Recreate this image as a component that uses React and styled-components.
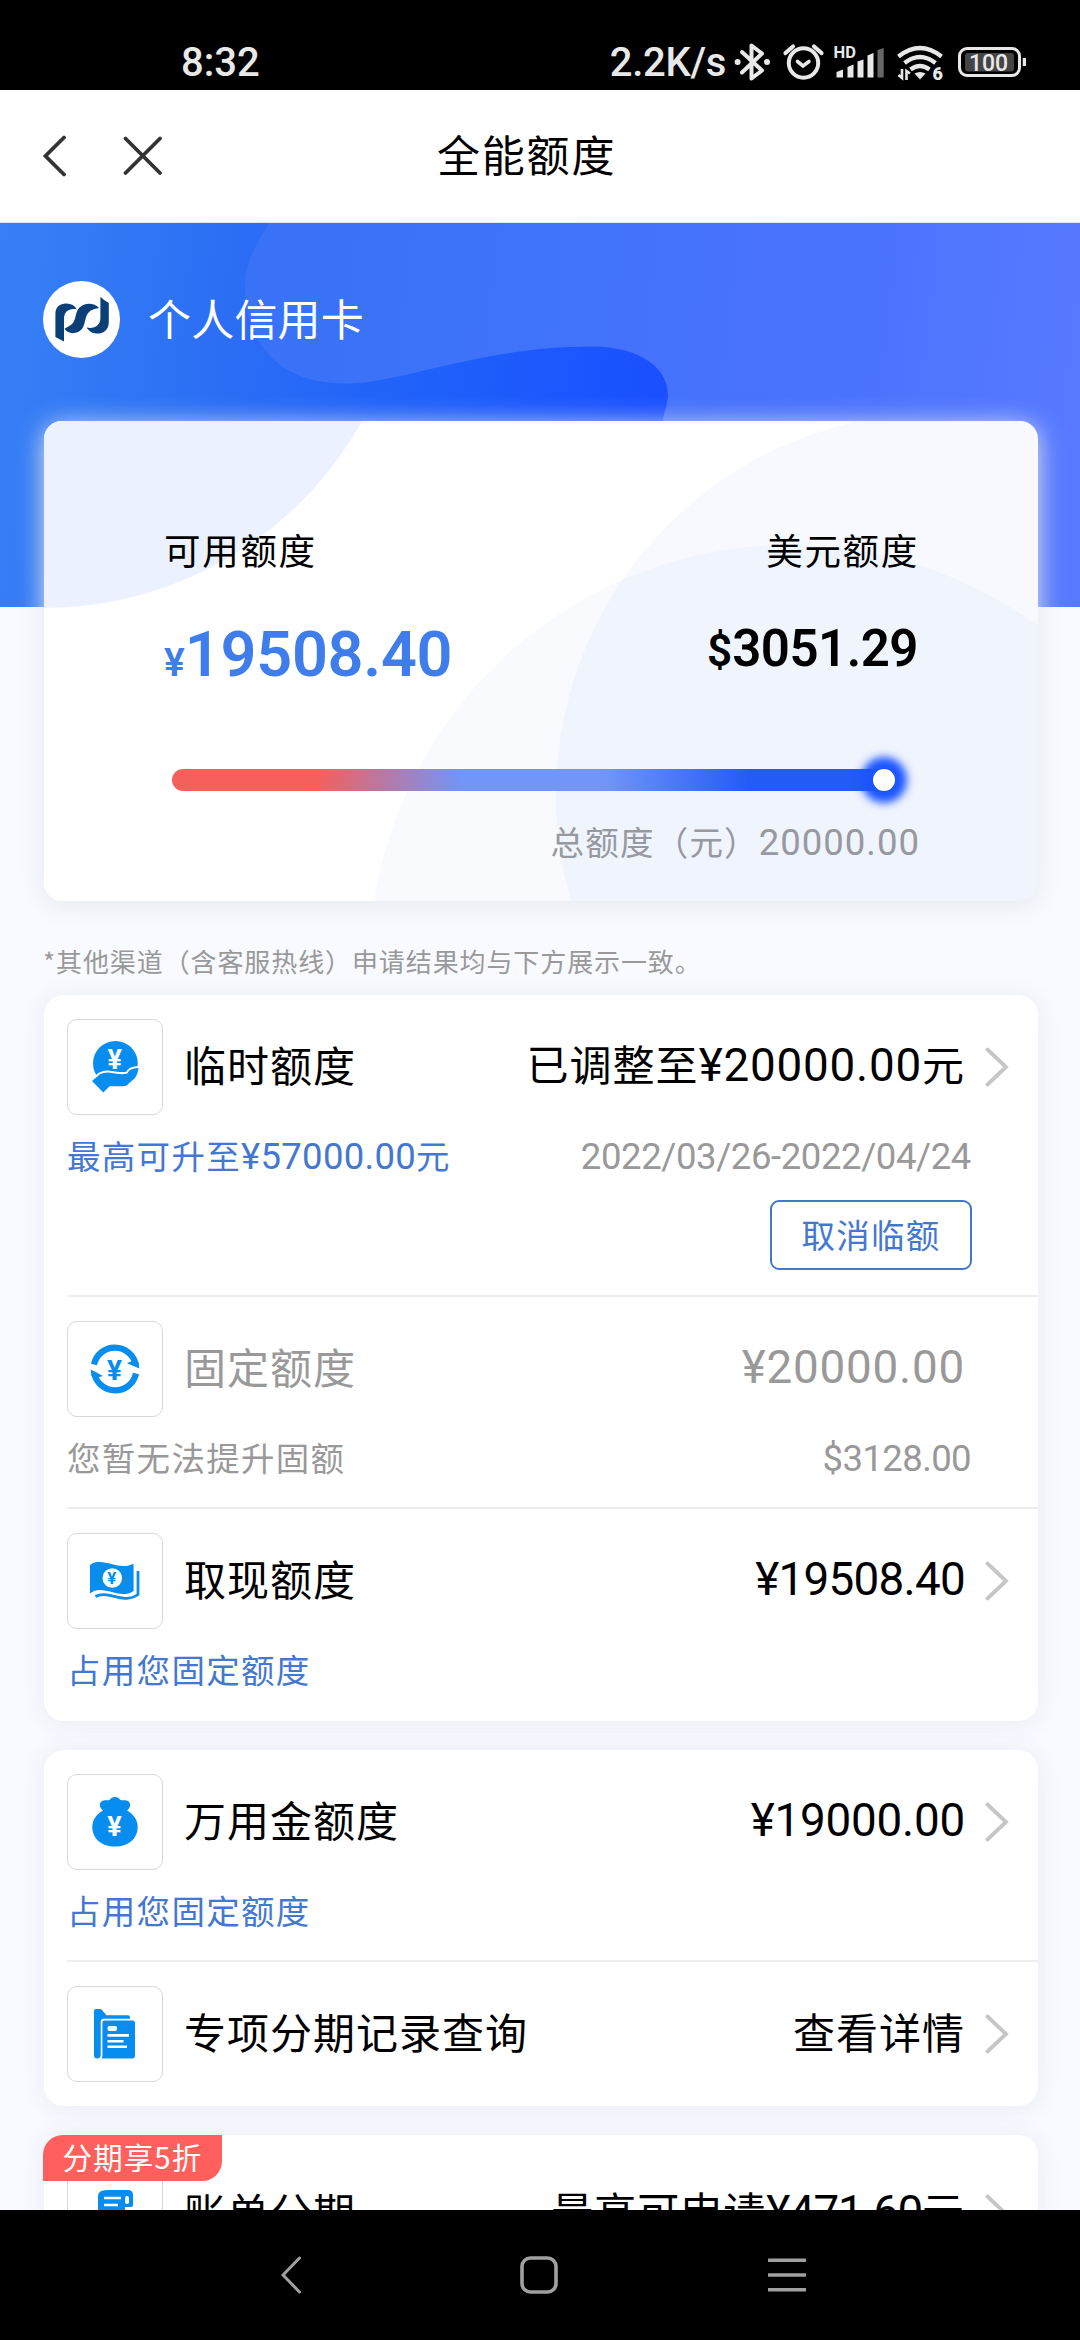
import React from "react"
import styled, { createGlobalStyle } from "styled-components"

const GlobalStyle = createGlobalStyle`
  * {
    box-sizing: border-box;
  }

  body {
    margin: 0;
    background: #000;
    font-family: "Noto Sans CJK SC", sans-serif;
    color: #000;
  }

  svg {
    display: block;
    flex: none;
  }
`

const Screen = styled.div`
  display: flex;
  flex-direction: column;
  width: 1080px;
  height: 2340px;
  overflow: hidden;
`

const StatusBar = styled.div`
  display: flex;
  align-items: flex-start;
  justify-content: space-between;
  height: 90px;
  padding: 40px 54px 0 181px;
  background: #000;
  color: #e8e8e8;
`

const StatusText = styled.span`
  font: 500 40px/46px Roboto, sans-serif;
  letter-spacing: ${props => props.$tracking || 0}px;
`

const StatusIcons = styled.div`
  display: flex;
  gap: 8px;
`

const TitleBar = styled.header`
  display: flex;
  align-items: center;
  height: 133px;
  padding: 0 43px 1px;
  background: #fff;
  border-bottom: 1px solid #dfe8fb;
`

const CloseIcon = styled.svg`
  margin-left: 57px;
`

const PageTitle = styled.h1`
  margin: 0 0 5px 274px;
  font-size: 43px;
  line-height: 60px;
  font-weight: 400;
  letter-spacing: 1.8px;
`

const Content = styled.main`
  flex: 1;
  min-height: 0;
  overflow: hidden;
  background: #f8faff;
`

const Hero = styled.section`
  position: relative;
  height: 384px;
  padding: 58px 43px;
  background: linear-gradient(97deg, #3781f5 0%, #2b6df5 22%, #2060fa 40%, #1a50ff 60%);
`

const HeroArt = styled.svg`
  position: absolute;
  inset: 0;
`

const CardName = styled.div`
  position: relative;
  display: flex;
  align-items: center;
  gap: 28px;
  height: 77px;
  color: #fff;
  font-size: 43px;
  line-height: 60px;
  letter-spacing: 0.2px;

  span {
    padding-bottom: 6px;
  }
`

const LimitCard = styled.section`
  position: relative;
  width: 994px;
  height: 480px;
  margin: -186px 0 0 44px;
  padding: 102px 121px 0 120px;
  border-radius: 18px;
  background: #fff;
  box-shadow: 0 4px 26px #e4e8ec;
`

const CardArt = styled.svg`
  position: absolute;
  inset: 0;
  border-radius: 18px;
`

const CardBody = styled.div`
  position: relative;
`

const Split = styled.div`
  display: flex;
  justify-content: space-between;
`

const LimitColumn = styled.div`
  text-align: ${props => props.$align || "left"};
`

const LimitLabel = styled.div`
  margin-right: -2px;
  font-size: 36.5px;
  line-height: 54px;
  letter-spacing: 1.7px;
`

const LimitAmount = styled.div`
  margin-top: ${props => (props.$primary ? 40 : 34)}px;
  margin-right: -1px;
  font: 600 ${props => (props.$primary ? 63 : 51)}px/76px Roboto, sans-serif;
  letter-spacing: ${props => (props.$primary ? -0.3 : -0.5)}px;
  color: ${props => (props.$primary ? "#3f7eea" : "#000")};

  small {
    font-size: ${props => (props.$primary ? 39 : 44)}px;
    letter-spacing: 0;
  }
`

const Track = styled.div`
  display: flex;
  justify-content: flex-end;
  width: 723px;
  height: 22px;
  margin: 68px 0 0 8px;
  border-radius: 11px;
  background: linear-gradient(
    90deg,
    #f5605b 20%,
    #7195f8 40%,
    #7195f8 60%,
    #225bf5 80%
  );
`

const Knob = styled.span`
  width: 22px;
  height: 22px;
  border-radius: 50%;
  background: #fff;
  box-shadow: 0 0 8px 12px #1c55ff;
`

const Total = styled.div`
  margin: 25px -3px 0 0;
  text-align: right;
  color: #96999f;
  font-size: 33.5px;
  line-height: 50px;
  letter-spacing: 1.2px;
`

const Num = styled.span`
  font-family: Roboto, sans-serif;
  font-size: 1.09em;
  letter-spacing: ${props => props.$tracking || 0}px;
`

const Note = styled.p`
  margin: 35px 0 10px 43px;
  color: #999;
  font-size: 26px;
  line-height: 49px;
  letter-spacing: 0.9px;
`

const Panel = styled.section`
  position: relative;
  width: 994px;
  margin: 0 0 29px 44px;
  padding-top: ${props => (props.$flagged ? 7 : 0)}px;
  border-radius: 20px;
  background: #fff;
  box-shadow: 0 2px 26px #e8ebf0;
`

const Item = styled.div`
  margin-left: 23px;
  padding-top: 24px;
  min-height: ${props => props.$height}px;
  border-bottom: ${props => (props.$last ? "none" : "2px solid #ededed")};
`

const ItemHead = styled.div`
  display: flex;
  align-items: center;
  height: 96px;
  padding-right: 29px;
  font-size: 42px;
  line-height: 60px;
  letter-spacing: 1px;
  color: ${props => (props.$muted ? "#999" : "#000")};
`

const IconBox = styled.div`
  display: flex;
  align-items: center;
  justify-content: center;
  width: 96px;
  height: 96px;
  margin-right: 21px;
  border: 1px solid #d8d8d8;
  border-radius: 10px;
`

const ItemTitle = styled.div`
  padding-bottom: 6px;
`

const ItemValue = styled.div`
  margin-left: auto;
  margin-right: ${props => (props.$linked ? 20 : 44)}px;
  padding-bottom: 6px;
`

const ItemSub = styled.div`
  display: flex;
  justify-content: space-between;
  margin: 15px 67px 0 0;
  font-size: 33.5px;
  line-height: 50px;
  letter-spacing: 1.3px;
  color: ${props => (props.$link ? "#4478d0" : "#999")};
`

const SubValue = styled.span`
  color: #999;
`

const CancelButton = styled.button`
  display: block;
  width: 202px;
  height: 70px;
  margin: 18px 66px 0 auto;
  padding: 0 0 3px;
  border: 2px solid #4378c8;
  border-radius: 9px;
  background: #fff;
  color: #4478d0;
  font: 33.5px/60px "Noto Sans CJK SC", sans-serif;
  letter-spacing: 1.2px;
`

const Flag = styled.span`
  position: absolute;
  top: 0;
  left: -1px;
  width: 179px;
  height: 46px;
  border-radius: 20px 0 20px 0;
  background: #ff605e;
  color: #fff;
  font-size: 29.5px;
  line-height: 42px;
  letter-spacing: 1.1px;
  text-align: center;
`

const NavBar = styled.nav`
  display: flex;
  align-items: center;
  gap: 210px;
  height: 130px;
  padding-left: 281px;
  background: #000;
`

const HomeIcon = styled.svg`
  margin-left: 9px;
`

const BLUE = "#078df0"

function Yen({ x, y, size, fill = "#fff" }) {
  return (
    <text
      x={x}
      y={y}
      fill={fill}
      fontFamily="Roboto, sans-serif"
      fontWeight="700"
      fontSize={size}
      textAnchor="middle"
    >
      ¥
    </text>
  )
}

function HandIcon() {
  return (
    <svg width="48" height="52" viewBox="0 0 48 52">
      <circle cx="24.4" cy="22.4" r="22.4" fill={BLUE} />
      <path
        d="M1 40 9 33.3Q14 31 19 31.8C26 32.6 31 34 36.4 32.6 38 29 40 27.5 47.5 27 47 31 46 34 44 37L35.5 44.5Q34 45.5 31 45.3H18.5L12.3 51.5Z"
        fill={BLUE}
        stroke="#fff"
        strokeWidth="4"
        paintOrder="stroke"
      />
      <Yen x={24.2} y={28} size={27} />
    </svg>
  )
}

function CycleIcon() {
  return (
    <svg width="50" height="52" viewBox="-25 -26 50 52">
      <g fill="none" stroke={BLUE} strokeWidth="6.2">
        <path d="M-21-4.5A21.3 21.3 0 0 1 20.8-4" />
        <path d="M21 4.5A21.3 21.3 0 0 1-20.8 4" />
      </g>
      <path d="M24.3-.5 12-5.7 19-9 23.5-7ZM-24.3.5-12 7-19 9-23.5 7Z" fill={BLUE} />
      <Yen x={0} y={10.5} size={28} fill={BLUE} />
    </svg>
  )
}

function BillIcon() {
  return (
    <svg width="50" height="39" viewBox="0 0 50 39">
      <path
        d="M0 3C3 .5 6 0 10 0 17 0 26 4 33 4 37 4 40 3.3 43.6 1.7V29C40 31.5 37 32 33 32 26 32 18 28 10 28 6 28 3 29 0 31.5Z"
        fill={BLUE}
      />
      <path
        d="M48 9V32.5C44 35.5 40 36.6 35 36.3 27 36 21 32.8 14 32.6 10 32.5 8 33 5.5 34.5"
        fill="none"
        stroke={BLUE}
        strokeWidth="2.8"
      />
      <circle cx="22.3" cy="16" r="9.8" fill="#fff" />
      <Yen x={22.3} y={22} size={17} fill={BLUE} />
    </svg>
  )
}

function BagIcon() {
  return (
    <svg width="46" height="50" viewBox="0 0 46 50">
      <path
        d="M11 13.5C6 10 7 3 13 3.2 15 3.2 16.5 3.6 18 2.4 21-.7 25-.7 28 2.4 29.5 3.6 31 3.2 33 3.2 39 3 40 10 35 13.5 42 17.5 45.7 23 45.7 30 45.7 42 36 49.5 23 49.5S.3 42 .3 30C.3 23 4 17.5 11 13.5Z"
        fill={BLUE}
      />
      <Yen x={23} y={38.5} size={27} />
    </svg>
  )
}

function RecordIcon() {
  return (
    <svg width="42" height="50" viewBox="0 0 42 50">
      <path
        d="M0 2Q0 0 2 0H7L12.5 6.3H34Q36 6.3 36 8.3V9.8H9.5Q6.7 10 6.7 13V47Q6 49.5 3.3 49.5 0 49.5 0 46Z"
        fill={BLUE}
      />
      <path
        d="M10.5 11.5H38.5Q41 11.5 41 14V46.5Q41 49.5 38 49.5H7.6Q8.4 48 8.4 46V13.5Q8.4 11.5 10.5 11.5Z"
        fill={BLUE}
      />
      <rect x="13.5" y="17" width="9.5" height="5" rx="2" fill="#fff" />
      <path d="M13.5 26.4H35M13.5 32.2H29.5M13.5 37.8H33" stroke="#fff" strokeWidth="2.6" />
    </svg>
  )
}

function StatementIcon() {
  return (
    <svg width="50" height="48" viewBox="0 0 50 48">
      <path
        d="M17 0H38Q43 0 43 5V15Q43 17 41 17H35V42Q35 46 31 46H12Q8 46 8 42V6Q8 0 17 0Z"
        fill={BLUE}
      />
      <path d="M14 8H31M14 15H28M14 22H28" stroke="#fff" strokeWidth="2.6" />
      <path d="M37 12V8" stroke="#fff" strokeWidth="4" strokeLinecap="round" />
    </svg>
  )
}

function Logo() {
  return (
    <svg width="77" height="77" viewBox="0 0 77 77">
      <circle cx="38.5" cy="38.5" r="38.5" fill="#fff" />
      <g fill="#0b3f78">
        <path d="M12.4 56V33C12.4 26 17 22.6 23 22.6 28 22.4 31.5 24.5 33.8 28.4 26 27 21 30.5 21 38V60.5Z" />
        <path d="M56 27C51 21.5 41.5 21.5 36.5 26.6 32 31.5 33.5 36.5 30.5 41 28.5 44.5 25 45.3 21.5 47.8 25 53.6 34 53.4 38.5 48.6 42.5 44 41.5 37.5 44.5 33 47 29 51 28 56 27Z" />
        <path d="M65.8 22V41C65.8 48.5 61 52.6 54.5 52.6 49.5 52.6 45.8 50.5 43.8 46.6 51.5 48 57.4 44.5 57.4 37V15.7Q60 18.5 65.8 22Z" />
      </g>
    </svg>
  )
}

function Chevron() {
  return (
    <svg width="24" height="40" viewBox="0 0 24 40">
      <path d="M2.5 2.5 21 20 2.5 37.5" fill="none" stroke="#c6c6c6" strokeWidth="3.8" strokeLinecap="round" />
    </svg>
  )
}

// bluetooth, alarm, signal, wifi and battery
function SystemIcons() {
  return (
    <svg width="292" height="42" viewBox="734 40 292 42" fill="none" stroke="#e8e8e8">
      <path
        d="M742 52 762 70.5 751.5 78.5V45.500L762 53.500 742 72.500"
        strokeWidth="4"
        strokeLinejoin="round"
        strokeLinecap="round"
      />
      <circle cx="737.6" cy="62" r="3" fill="#e8e8e8" stroke="none" />
      <circle cx="767" cy="62" r="3" fill="#e8e8e8" stroke="none" />

      <circle cx="803.5" cy="63" r="14.7" strokeWidth="4" />
      <path d="M797.5 61.5 803 66 809 61.5" strokeWidth="3.6" strokeLinecap="round" />
      <path d="M785.5 53 793 46.5M821.5 53 814 46.5" strokeWidth="4.2" strokeLinecap="round" />

      <text x="833.5" y="58" fontFamily="Roboto, sans-serif" fontWeight="700" fontSize="16.5" fill="#e8e8e8" stroke="none">
        HD
      </text>
      <g fill="#e8e8e8" stroke="none">
        <path d="M836.5 72 843 69.5V77.5H836.5ZM847.5 67 853.5 64.5V77.5H847.5ZM857.5 61.5 863.5 59.5V77.5H857.5ZM867.5 55.5 873.5 53V77.5H867.5Z" />
        <path d="M877.5 50 883.7 48V77.5H877.5Z" fill="#666" />
      </g>

      <g strokeWidth="4.4">
        <path d="M898.5 56.5Q920 39.5 941.5 56.5" />
        <path d="M904.5 63Q920 51 935.5 63" />
        <path d="M910.5 69.5Q920 62.5 929.5 69.5" />
      </g>
      <path d="M914.5 73.5Q920 70.5 925.5 73.5L920 79.5Z" fill="#e8e8e8" stroke="none" />
      <path d="M902 69V78L898.5 75M906.5 80V71L910 73.5" strokeWidth="2.6" />
      <text x="932.5" y="80" fontFamily="Roboto, sans-serif" fontWeight="900" fontSize="18" fill="#e8e8e8" stroke="none">
        6
      </text>

      <rect x="959.5" y="48.5" width="60" height="27" rx="7.5" strokeWidth="3" />
      <rect x="965" y="53" width="49" height="18.5" rx="3" fill="#444" stroke="none" />
      <path d="M1024.5 58V66" strokeWidth="3.5" />
      <text
        x="988.5"
        y="70.5"
        textAnchor="middle"
        fontFamily="Roboto, sans-serif"
        fontWeight="500"
        fontSize="23"
        fill="#e8e8e8"
        stroke="none"
      >
        100
      </text>
    </svg>
  )
}

function LimitItem({ icon, title, value, linked, muted, sub, subLink, subValue, height, last, children }) {
  return (
    <Item $height={height} $last={last}>
      <ItemHead $muted={muted}>
        <IconBox>{icon}</IconBox>
        <ItemTitle>{title}</ItemTitle>
        <ItemValue $linked={linked}>{value}</ItemValue>
        {linked && <Chevron />}
      </ItemHead>
      {sub && (
        <ItemSub $link={subLink}>
          <span>{sub}</span>
          {subValue && <SubValue>{subValue}</SubValue>}
        </ItemSub>
      )}
      {children}
    </Item>
  )
}

export default function App() {
  return (
    <Screen>
      <GlobalStyle />
      <StatusBar>
        <StatusText>8:32</StatusText>
        <StatusIcons>
          <StatusText $tracking={-0.3}>2.2K/s</StatusText>
          <SystemIcons />
        </StatusIcons>
      </StatusBar>
      <TitleBar>
        <svg width="23" height="42" viewBox="0 0 23 42" fill="none" stroke="#333" strokeWidth="3.8">
          <path d="M21 2.5 2.5 21 21 39.5" strokeLinecap="round" />
        </svg>
        <CloseIcon width="40" height="40" viewBox="0 0 40 40" fill="none" stroke="#333" strokeWidth="3.8">
          <path d="M2.5 2.5 37 37M37 2.5 2.5 37" strokeLinecap="round" />
        </CloseIcon>
        <PageTitle>全能额度</PageTitle>
      </TitleBar>

      <Content>
        <Hero>
          <HeroArt width="1080" height="384" viewBox="0 0 1080 384">
            <defs>
              <linearGradient id="wave" x1="244" y1="0" x2="1080" y2="100" gradientUnits="userSpaceOnUse">
                <stop offset="0" stopColor="#3872f6" />
                <stop offset="0.35" stopColor="#3f73fa" />
                <stop offset="0.7" stopColor="#4b72fd" />
                <stop offset="1" stopColor="#5679ff" />
              </linearGradient>
            </defs>
            <path
              d="M269 0C250 30 244 48 245 66 246 108 268 160 344 160.5 400 161 480 123.5 592 123.5 640 123.5 668 145 668 172 668 182 663 190 660 215V384H1080V0Z"
              fill="url(#wave)"
            />
          </HeroArt>
          <CardName>
            <Logo />
            <span>个人信用卡</span>
          </CardName>
        </Hero>

        <LimitCard>
          <CardArt width="994" height="480" viewBox="0 0 994 480">
            <circle cx="0" cy="-177" r="364" fill="#ebf1fe" />
            <circle cx="894" cy="374" r="382" fill="#3c78e6" fillOpacity="0.045" />
            <circle cx="746" cy="545" r="421" fill="#3c6ee1" fillOpacity="0.035" />
          </CardArt>
          <CardBody>
            <Split>
              <LimitColumn>
                <LimitLabel>可用额度</LimitLabel>
                <LimitAmount $primary>
                  <small>¥</small>19508.40
                </LimitAmount>
              </LimitColumn>
              <LimitColumn $align="right">
                <LimitLabel>美元额度</LimitLabel>
                <LimitAmount>
                  <small>$</small>3051.29
                </LimitAmount>
              </LimitColumn>
            </Split>
            <Track>
              <Knob />
            </Track>
            <Total>
              总额度（元）<Num $tracking={1}>20000.00</Num>
            </Total>
          </CardBody>
        </LimitCard>

        <Note>*其他渠道（含客服热线）申请结果均与下方展示一致。</Note>

        <Panel>
          <LimitItem
            icon={<HandIcon />}
            title="临时额度"
            value={
              <>
                已调整至<Num $tracking={0.8}>¥20000.00</Num>元
              </>
            }
            linked
            sub={
              <>
                最高可升至<Num $tracking={0.3}>¥57000.00</Num>元
              </>
            }
            subLink
            subValue={<Num $tracking={-0.4}>2022/03/26-2022/04/24</Num>}
            height={302}
          >
            <CancelButton>取消临额</CancelButton>
          </LimitItem>
          <LimitItem
            icon={<CycleIcon />}
            title="固定额度"
            value={<Num $tracking={0.8}>¥20000.00</Num>}
            muted
            sub="您暂无法提升固额"
            subValue={<Num $tracking={-0.6}>$3128.00</Num>}
            height={212}
          />
          <LimitItem
            icon={<BillIcon />}
            title="取现额度"
            value={<Num $tracking={-0.7}>¥19508.40</Num>}
            linked
            sub="占用您固定额度"
            subLink
            height={212}
            last
          />
        </Panel>

        <Panel>
          <LimitItem
            icon={<BagIcon />}
            title="万用金额度"
            value={<Num $tracking={-0.2}>¥19000.00</Num>}
            linked
            sub="占用您固定额度"
            subLink
            height={212}
          />
          <LimitItem icon={<RecordIcon />} title="专项分期记录查询" value="查看详情" linked height={144} last />
        </Panel>

        <Panel $flagged>
          <LimitItem
            icon={<StatementIcon />}
            title="账单分期"
            value={
              <>
                最高可申请<Num $tracking={-1.3}>¥471.60</Num>元
              </>
            }
            linked
            height={212}
            last
          />
          <Flag>分期享5折</Flag>
        </Panel>
      </Content>

      <NavBar>
        <svg width="20" height="38" viewBox="0 0 20 38" fill="none" stroke="#a0a0a0" strokeWidth="3">
          <path d="M18.5 2 2 19 18.5 36" strokeLinecap="round" />
        </svg>
        <HomeIcon width="38" height="38" viewBox="0 0 38 38" fill="none" stroke="#a0a0a0" strokeWidth="3.6">
          <rect x="2" y="2" width="34" height="34" rx="8.5" />
        </HomeIcon>
        <svg width="38" height="36" viewBox="0 0 38 36" fill="none" stroke="#a0a0a0" strokeWidth="3.6">
          <path d="M1 3.3H37M1 18H37M1 32.7H37" strokeLinecap="round" />
        </svg>
      </NavBar>
    </Screen>
  )
}
